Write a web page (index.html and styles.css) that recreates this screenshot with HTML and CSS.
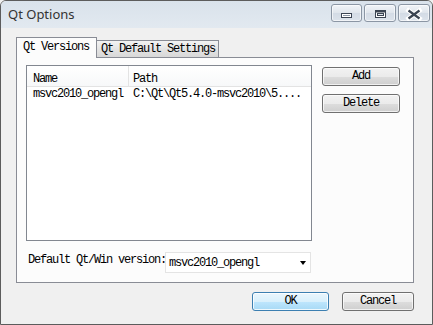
FILE: index.html
```html
<!DOCTYPE html>
<html lang="en">
<head>
    <meta charset="UTF-8">
    <title>Qt Options</title>
    <link rel="stylesheet" href="styles.css">
</head>
<body>
    <div class="window">
        <div class="titlebar">
            <span class="title">Qt Options</span>
            <div class="controls">
                <div class="ctl ctl-min">
                    <svg width="29" height="16" viewBox="0 0 29 16">
                        <rect x="9.5" y="8.5" width="10" height="4" fill="#fff" stroke="#3a4452"/>
                        <rect x="11" y="10" width="7" height="1" fill="#8a96a6"/>
                    </svg>
                </div>
                <div class="ctl ctl-max">
                    <svg width="30" height="16" viewBox="0 0 30 16">
                        <rect x="10.5" y="5.5" width="10" height="7" fill="#fff" stroke="#3a4452"/>
                        <rect x="11" y="6" width="9" height="1.5" fill="#3a4452"/>
                        <rect x="12.5" y="8.5" width="6" height="2" fill="#dfe5ec" stroke="#3a4452"/>
                    </svg>
                </div>
                <div class="ctl ctl-close">
                    <svg width="30" height="16" viewBox="0 0 30 16">
                        <path d="M9.5 5.5 L20.5 13.5 M20.5 5.5 L9.5 13.5" stroke="#fff" stroke-width="4.5" stroke-linecap="square"/>
                        <path d="M9.5 5.5 L20.5 13.5 M20.5 5.5 L9.5 13.5" stroke="#3a4452" stroke-width="2.2"/>
                    </svg>
                </div>
            </div>
        </div>

        <div class="client">
            <div class="tabs">
                <div class="tab active">Qt Versions</div>
                <div class="tab">Qt Default Settings</div>
            </div>

            <div class="pane">
                <div class="top">
                    <div class="list">
                        <div class="list-head">
                            <div class="col col-name">Name</div>
                            <div class="col col-path">Path</div>
                        </div>
                        <div class="list-row">
                            <div class="col col-name">msvc2010_opengl</div>
                            <div class="col col-path">C:\Qt\Qt5.4.0-msvc2010\5....</div>
                        </div>
                    </div>
                    <div class="side">
                        <button class="btn">Add</button>
                        <button class="btn">Delete</button>
                    </div>
                </div>

                <div class="combo-row">
                    <span class="combo-label">Default Qt/Win version:</span>
                    <div class="combo">
                        <span class="combo-text">msvc2010_opengl</span>
                        <span class="arrow"></span>
                    </div>
                </div>
            </div>

            <div class="actions">
                <button class="btn btn-ok">OK</button>
                <button class="btn btn-cancel">Cancel</button>
            </div>
        </div>
    </div>
</body>
</html>
```

FILE: styles.css
```css
:root {
    --frame: #5c5c5c;
    --face: #f0f0f0;
    --tab-border: #898c95;
    --text: #000000;
}

* {
    margin: 0;
    padding: 0;
    box-sizing: border-box;
}

body {
    width: 433px;
    height: 325px;
    overflow: hidden;
    background: var(--face);
    color: var(--text);
    font-family: "Liberation Mono", "DejaVu Sans Mono", monospace;
    font-size: 12px;
    letter-spacing: -1.2px;
}

.window {
    width: 433px;
    height: 325px;
    border: 1px solid var(--frame);
    border-radius: 6px 6px 0 0;
    background: var(--face);
    overflow: hidden;
}

/* title bar */

.titlebar {
    height: 27px;
    display: flex;
    align-items: flex-start;
    background: linear-gradient(#d9e2eb, #e2e9f0);
}

.title {
    margin: 4px 0 0 7px;
    font-family: "Noto Sans", "Open Sans", sans-serif;
    font-size: 13px;
    letter-spacing: 0;
    line-height: 18px;
    color: #333;
}

.controls {
    margin: 3px 2px 0 auto;
    display: flex;
    gap: 2px;
}

.ctl {
    width: 32px;
    height: 18px;
    border: 1px solid #8b96a4;
    border-radius: 3px;
    background: linear-gradient(#f1f4f8, #dfe5ec 50%, #d3dbe5 51%, #dce3eb);
    box-shadow: inset 0 0 0 1px rgba(255, 255, 255, 0.6);
}

.ctl svg {
    display: block;
}

.ctl-min {
    width: 31px;
}

/* dialog body */

.client {
    padding: 9px 18px 0 15px;
}

.tabs {
    display: flex;
    align-items: flex-end;
    height: 20px;
    position: relative;
    z-index: 1;
}

.tab {
    height: 17px;
    width: 122px;
    padding-left: 4px;
    border: 1px solid var(--tab-border);
    border-bottom: none;
    border-left: none;
    background: linear-gradient(#f3f3f3, #e4e4e4 50%, #d8d8d8);
    line-height: 16px;
    white-space: nowrap;
}

.tab.active {
    width: 81px;
    height: 21px;
    margin-bottom: -1px;
    padding-left: 6px;
    border-left: 1px solid var(--tab-border);
    background: #fcfcfc;
    line-height: 18px;
}

.pane {
    height: 226px;
    border: 1px solid var(--tab-border);
    background: #fcfcfc;
    padding: 7px 13px 0 9px;
}

.top {
    display: flex;
    gap: 10px;
}

.list {
    width: 286px;
    height: 176px;
    border: 1px solid #828790;
    background: #fff;
}

.list-head,
.list-row {
    display: flex;
}

.list-head {
    height: 21px;
    border-bottom: 1px solid #e3e3e3;
    background: linear-gradient(#ffffff, #f7f8f9);
}

.list-head .col {
    padding-top: 6px;
    line-height: 14px;
}

.list-row .col {
    line-height: 14px;
}

.col {
    white-space: nowrap;
}

.col-name {
    width: 102px;
    padding-left: 6px;
}

.list-head .col-name {
    border-right: 1px solid #e3e3e3;
}

.col-path {
    padding-left: 4px;
}

.side {
    margin-top: 2px;
    display: flex;
    flex-direction: column;
    gap: 8px;
}

.btn {
    width: 78px;
    height: 19px;
    border: 1px solid #707070;
    border-radius: 3px;
    background: linear-gradient(#f2f2f2, #ebebeb 50%, #dddddd 51%, #cfcfcf);
    box-shadow: inset 0 0 0 1px rgba(255, 255, 255, 0.7);
    font: inherit;
    letter-spacing: inherit;
    color: var(--text);
    line-height: 15px;
}

.combo-row {
    margin-top: 11px;
    padding-left: 2px;
    display: flex;
    align-items: flex-start;
}

.combo-label {
    margin-top: 1px;
    line-height: 14px;
    white-space: nowrap;
}

.combo {
    width: 146px;
    height: 21px;
    margin-left: -1px;
    border: 1px solid #e4e4e4;
    background: #fff;
    display: flex;
    align-items: flex-start;
}

.combo-text {
    margin-top: 3px;
    padding-left: 3px;
    line-height: 14px;
}

.arrow {
    margin: 8px 4px 0 auto;
    width: 0;
    height: 0;
    border-top: 4px solid #000;
    border-left: 3.5px solid transparent;
    border-right: 3.5px solid transparent;
}

.actions {
    margin-top: 9px;
    display: flex;
    justify-content: flex-end;
    gap: 13px;
}

.btn-ok {
    width: 77px;
    border-color: #3c7fb1;
    background: linear-gradient(#eaf6fd, #d9f0fc 50%, #bee6fd 51%, #a7d9f5);
    box-shadow: inset 0 0 0 1px rgba(255, 255, 255, 0.8);
}

.btn-cancel {
    width: 72px;
}
```
